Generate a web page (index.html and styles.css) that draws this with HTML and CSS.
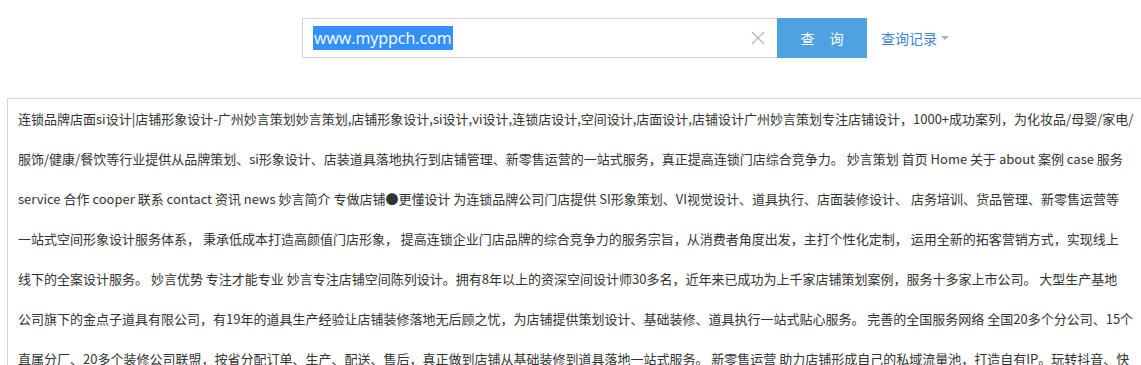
FILE: index.html
```html
<!DOCTYPE html>
<html lang="zh-CN">
<head>
    <meta charset="UTF-8">
    <title>查询</title>
    <link rel="stylesheet" href="styles.css">
</head>
<body>
    <!-- 搜索栏 -->
    <div class="search-bar">
        <div class="search-box">
            <span class="search-text"><span class="selected">www.myppch.com</span></span>
            <span class="clear">
                <svg width="14" height="14" viewBox="0 0 14 14"><path d="M1 1 L13 13 M13 1 L1 13" stroke="#b5b5b5" stroke-width="1.2" fill="none"/></svg>
            </span>
        </div>
        <button class="search-btn">查 询</button>
        <a class="history" href="#">查询记录<span class="caret"></span></a>
    </div>

    <!-- 页面内容 -->
    <div class="result">
        连锁品牌店面si设计|店铺形象设计-广州妙言策划妙言策划,店铺形象设计,si设计,vi设计,连锁店设计,空间设计,店面设计,店铺设计广州妙言策划专注店铺设计，1000+成功案列，为化妆品/母婴/家电/<br>
        服饰/健康/餐饮等行业提供从品牌策划、si形象设计、店装道具落地执行到店铺管理、新零售运营的一站式服务，真正提高连锁门店综合竞争力。 妙言策划 首页 Home 关于 about 案例 case 服务<br>
        service 合作 cooper 联系 contact 资讯 news 妙言简介 专做店铺●更懂设计 为连锁品牌公司门店提供 SI形象策划、VI视觉设计、道具执行、店面装修设计、 店务培训、货品管理、新零售运营等<br>
        一站式空间形象设计服务体系， 秉承低成本打造高颜值门店形象， 提高连锁企业门店品牌的综合竞争力的服务宗旨，从消费者角度出发，主打个性化定制， 运用全新的拓客营销方式，实现线上<br>
        线下的全案设计服务。 妙言优势 专注才能专业 妙言专注店铺空间陈列设计。拥有8年以上的资深空间设计师30多名，近年来已成功为上千家店铺策划案例，服务十多家上市公司。 大型生产基地<br>
        公司旗下的金点子道具有限公司，有19年的道具生产经验让店铺装修落地无后顾之忧，为店铺提供策划设计、基础装修、道具执行一站式贴心服务。 完善的全国服务网络 全国20多个分公司、15个<br>
        直属分厂、20多个装修公司联盟，按省分配订单、生产、配送、售后，真正做到店铺从基础装修到道具落地一站式服务。 新零售运营 助力店铺形成自己的私域流量池，打造自有IP。玩转抖音、快
    </div>
</body>
</html>
```

FILE: styles.css
```css
body {
    margin: 0;
    font-family: "Noto Sans CJK SC", "Open Sans", sans-serif;
    background-color: #fff;
    color: #333;
    overflow: hidden;
}
.search-bar {
    display: flex;
    align-items: center;
    padding: 18px 0 0 302px;
    height: 40px;
}
.search-box {
    box-sizing: border-box;
    width: 475px;
    height: 40px;
    border: 1px solid #cfd3d8;
    border-right: none;
    display: flex;
    align-items: center;
    justify-content: space-between;
    padding: 0 12px 0 10px;
}
.search-text {
    font-family: "Open Sans", "Noto Sans", sans-serif;
    font-size: 16px;
    line-height: 21px;
}
.selected {
    background-color: #3390ff;
    color: #fff;
    padding: 1px 1px 1px 1px;
}
.clear {
    display: flex;
}
.search-btn {
    width: 90px;
    height: 40px;
    border: none;
    background-color: #4ea2e1;
    color: #fff;
    font-family: "Noto Sans CJK SC", sans-serif;
    font-size: 14px;
    letter-spacing: 6px;
    padding: 0 0 0 6px;
    cursor: pointer;
}
.history {
    margin-left: 14px;
    font-size: 14px;
    color: #4583d6;
    text-decoration: none;
    display: flex;
    align-items: center;
}
.caret {
    margin-left: 4px;
    width: 0;
    height: 0;
    border-left: 4px solid transparent;
    border-right: 4px solid transparent;
    border-top: 4px solid #b0b0b0;
}
.result {
    margin: 40px 0 0 7px;
    border-top: 1px solid #d4d4d4;
    border-left: 1px solid #d4d4d4;
    padding: 0 0 0 10px;
    font-size: 13px;
    line-height: 40px;
    white-space: nowrap;
    overflow: hidden;
    color: #333;
}
```
